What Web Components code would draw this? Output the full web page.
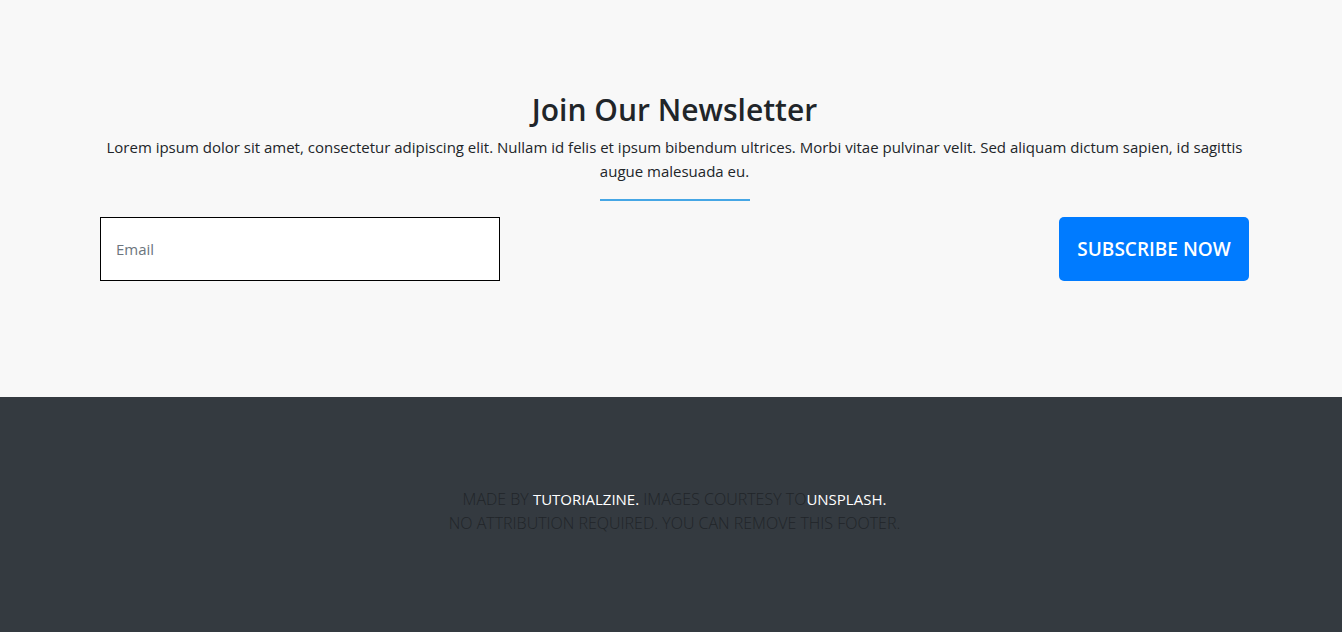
<!DOCTYPE html>
<html lang="en">
<head>
<meta charset="utf-8">
<meta name="viewport" content="width=device-width, initial-scale=1">
<title>Newsletter</title>
<style>
body { margin: 0; min-height: 100vh; display: flex; flex-direction: column; background: #343a40; color: #212529; font: 400 15px/24px "Segoe UI", "Open Sans", "Noto Sans", sans-serif; }
</style>
</head>
<body>
<newsletter-section>
  <span slot="title">Join Our Newsletter</span>
  <span slot="text">Lorem ipsum dolor sit amet, consectetur adipiscing elit. Nullam id felis et ipsum bibendum ultrices. Morbi vitae pulvinar velit. Sed aliquam dictum sapien, id sagittis augue malesuada eu.</span>
  <subscribe-form></subscribe-form>
</newsletter-section>
<page-footer></page-footer>
<script>
const define = (name, html) => customElements.define(name, class extends HTMLElement {
  constructor() {
    super();
    this.attachShadow({ mode: "open" }).innerHTML = html;
  }
});

define("newsletter-section", `
<style>
:host { display: block; background: #f8f8f8; padding: 91px 93px 116px 100px; }
h2 { margin: 0 0 6px; font-size: 30px; line-height: 38px; font-weight: 600; text-align: center; }
p { margin: 0; text-align: center; }
.rule { width: 150px; height: 2px; margin: 16px auto; background: #45a6e5; }
</style>
<h2><slot name="title"></slot></h2>
<p><slot name="text"></slot></p>
<div class="rule"></div>
<slot></slot>`);

define("subscribe-form", `
<style>
:host { display: block; }
form { display: flex; justify-content: space-between; gap: 16px; margin: 0; }
input, button { box-sizing: border-box; height: 64px; font-family: inherit; }
input { width: 400px; min-width: 0; padding: 0 15px; border: 1px solid #000; border-radius: 0; background: #fff; color: #495057; font-size: 15px; }
input::placeholder { color: #6c757d; opacity: 1; }
button { width: 190px; flex: none; padding: 0; border: 0; border-radius: 5px; background: #007bff; color: #fff; font-size: 19px; font-weight: 600; text-transform: uppercase; white-space: nowrap; }
</style>
<form>
  <input type="email" placeholder="Email" aria-label="Email">
  <button type="button">Subscribe now</button>
</form>`);

define("page-footer", `
<style>
:host { display: block; flex: 1; background: #343a40; padding: 90px 93px 96px 100px; text-align: center; text-transform: uppercase; }
p { margin: 0; font-size: 16px; font-weight: 300; }
a { color: #fff; text-decoration: none; font-size: 15px; font-weight: 400; }
</style>
<footer>
  <p>Made by <a href="#">Tutorialzine.</a> Images courtesy to<a href="#">Unsplash.</a></p>
  <p>No attribution required. You can remove this footer.</p>
</footer>`);
</script>
</body>
</html>
